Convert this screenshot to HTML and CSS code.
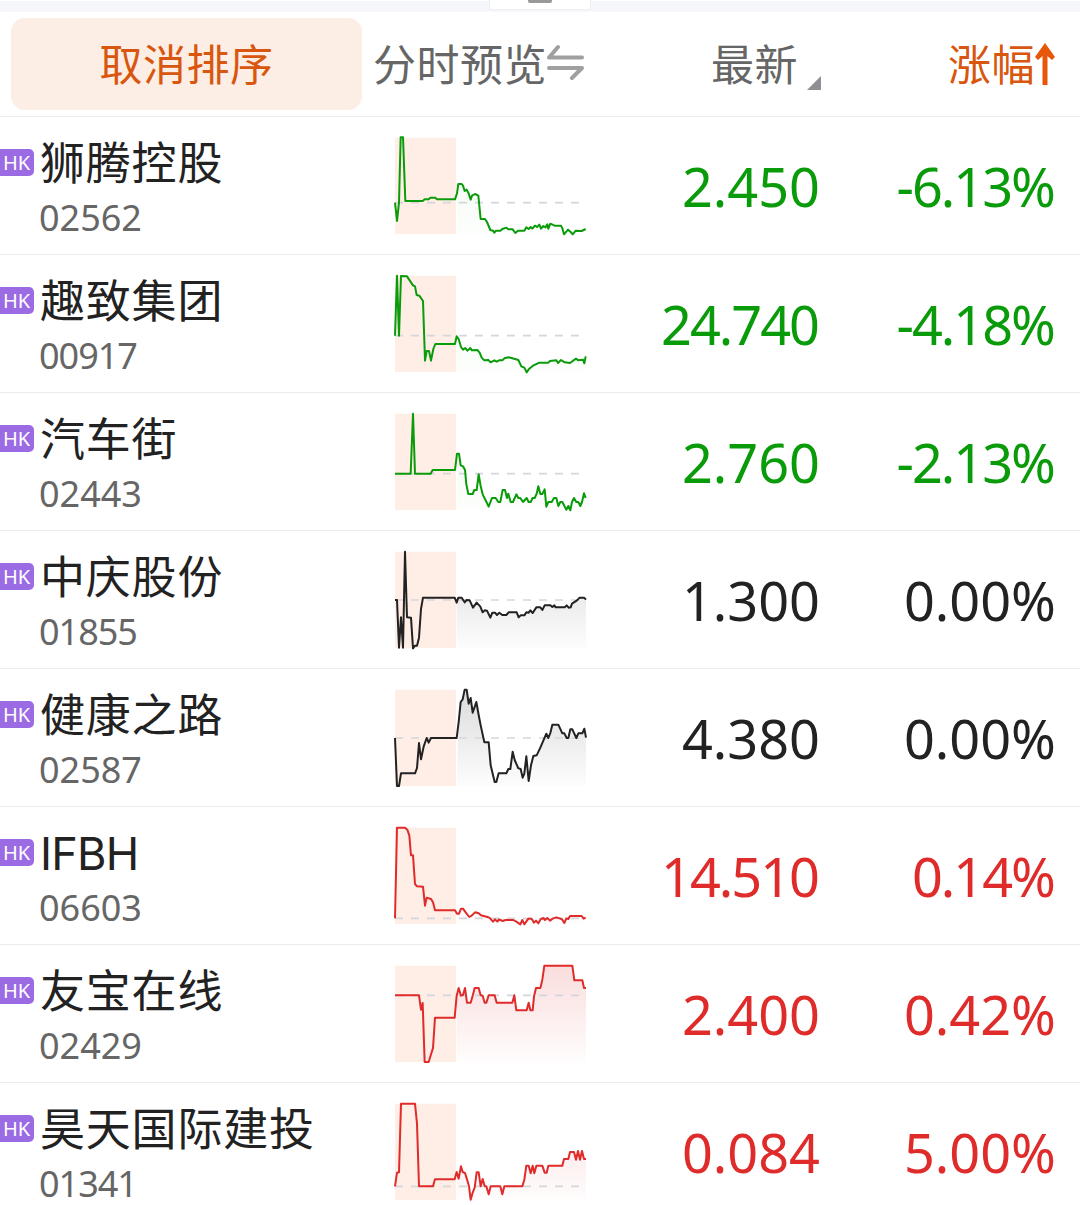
FILE: index.html
```html
<!DOCTYPE html>
<html lang="zh-CN">
  <head>
    <meta charset="UTF-8" />
    <meta name="viewport" content="width=device-width, initial-scale=1.0" />
    <title>自选股</title>
    <link rel="stylesheet" href="styles.css">
  </head>

  <body>
    <div class="strip">
      <div class="handle"><span class="bar"></span></div>
    </div>
    <div class="head">
      <button class="cancel">取消排序</button>
      <div class="preview">
        <span>分时预览</span>
        <svg class="swap" width="38" height="38" viewBox="0 0 38 38">
          <path d="M11 4L2 14.500H35M2 25H35L25 35" />
        </svg>
      </div>
      <div class="latest">
        <span>最新</span>
        <svg class="corner" width="14" height="14" viewBox="0 0 14 14"><path d="M14 0V14H0Z" /></svg>
      </div>
      <div class="change">
        <span>涨幅</span>
        <svg class="arrow" width="20" height="42" viewBox="0 0 20 42">
          <path class="stem" d="M10 42V6" />
          <path class="tip" d="M10 0L20 14L17 17L10 11L3 17L0 14Z" />
        </svg>
      </div>
    </div>
    <div class="list"></div>

    <script>
      // base: y of the dashed line, pre: line before the open, day: line after it
      const stocks = [
        {
          name: "狮腾控股", code: "02562", price: "2.450", rate: "-6.13%", type: "down", base: 233,
          pre: "30,233 36,288 42,233 47,37 54,37 61,228 113,228 119,223 131,223 136,218 151,218 156,223 210,223",
          day: "210,223 216,205 220,177 230,177 234,182 239,198 245,194 250,203 257,224 261,212 270,207 280,212 287,282 300,282 306,291 316,315 324,317 328,323 333,317 346,317 352,312 364,308 370,313 383,313 391,324 399,317 418,317 424,307 431,312 437,306 442,311 450,302 456,306 463,299 468,311 475,303 482,307 487,298 490,311 496,296 509,302 528,302 532,310 537,328 549,314 557,321 563,328 572,317 590,318 602,312",
        },
        {
          name: "趣致集团", code: "00917", price: "24.740", rate: "-4.18%", type: "down", base: 218,
          pre: "30,218 36,38 42,218 48,39 66,40 84,67 90,70 95,96 103,98 114,114 120,293 125,264 132,264 138,293 145,258 151,243 210,243",
          day: "210,243 215,220 221,228 228,252 234,260 241,255 247,263 256,255 260,262 277,261 284,269 290,284 298,292 310,291 317,298 328,292 335,296 342,292 352,292 358,286 371,283 390,288 400,291 409,310 418,314 425,328 432,318 444,308 463,299 490,299 495,294 514,292 519,300 528,291 539,298 555,300 573,287 580,292 594,290 598,301 602,280",
        },
        {
          name: "汽车街", code: "02443", price: "2.760", rate: "-2.13%", type: "down", base: 218,
          pre: "30,218 77,218 84,38 90,218 137,218 143,207 210,207",
          day: "210,207 216,158 222,158 227,193 234,196 240,207 244,250 250,279 263,279 268,267 275,267 281,220 287,255 293,280 303,300 311,317 321,291 332,291 340,303 346,303 353,267 360,267 366,291 370,278 377,303 384,303 394,280 400,291 406,291 414,303 425,291 431,303 437,303 443,291 449,291 455,278 460,256 466,279 472,279 479,265 484,317 490,303 500,303 507,291 514,291 520,315 526,303 532,303 544,326 550,315 556,328 561,303 567,291 574,303 580,303 586,315 591,303 597,277 602,291",
        },
        {
          name: "中庆股份", code: "01855", price: "1.300", rate: "0.00%", type: "flat", base: 183,
          pre: "30,183 36,183 42,326 48,235 54,326 60,38 66,235 78,236 84,328 90,320 96,320 102,296 108,210 114,176 209,176",
          day: "209,176 215,191 220,176 230,176 239,190 245,183 254,184 264,206 275,191 286,203 293,220 299,214 306,215 316,236 322,221 330,221 336,228 343,221 352,228 364,228 371,220 395,220 401,235 407,229 418,229 424,220 431,221 436,214 443,222 454,205 466,205 472,213 479,199 496,199 502,204 508,199 512,205 539,205 545,199 551,206 557,205 561,194 576,184 584,176 597,176 603,182",
        },
        {
          name: "健康之路", code: "02587", price: "4.380", rate: "0.00%", type: "flat", base: 183,
          pre: "30,183 36,327 42,327 48,289 90,289 96,273 102,198 108,247 116,209 125,183 131,197 138,183 215,183",
          day: "215,183 221,135 227,75 233,67 239,38 245,38 251,80 257,63 263,107 274,75 281,114 287,145 298,196 311,196 317,265 323,290 329,315 334,315 341,289 364,289 370,276 376,276 383,224 389,249 400,274 407,276 413,302 418,290 424,238 431,312 438,265 445,237 455,235 466,212 484,170 490,183 496,168 502,143 520,143 532,169 538,169 545,183 550,183 556,157 562,157 574,183 580,169 592,169 598,155 603,182",
        },
        {
          name: "IFBH", code: "06603", price: "14.510", rate: "0.14%", type: "up", base: 310,
          pre: "30,310 36,38 60,38 67,44 73,62 78,121 84,121 90,207 96,214 114,215 120,272 125,248 138,252 144,262 150,286 210,286",
          day: "210,286 216,296 222,296 228,281 234,281 242,292 253,306 260,302 270,292 281,295 288,301 307,306 313,308 324,320 330,313 337,320 342,313 353,318 362,315 385,315 394,320 406,328 412,315 418,328 430,311 440,311 447,323 453,317 460,325 467,313 475,309 480,315 487,309 495,317 503,311 514,307 526,311 532,314 538,324 544,310 550,312 555,303 590,303 596,311 602,308",
        },
        {
          name: "友宝在线", code: "02429", price: "2.400", rate: "0.42%", type: "up", base: 127,
          pre: "30,127 102,127 108,170 113,150 119,327 131,327 144,285 150,194 209,194",
          day: "209,194 215,128 221,105 228,128 234,126 240,105 246,149 257,149 263,128 269,105 281,105 287,127 293,128 299,149 304,149 311,127 329,127 335,149 382,149 388,127 394,172 425,172 431,149 436,172 443,172 447,130 453,105 466,105 472,80 478,38 562,38 568,82 592,82 597,105 603,105",
        },
        {
          name: "昊天国际建投", code: "01341", price: "0.084", rate: "5.00%", type: "up", base: 286,
          pre: "30,286 36,245 42,244 48,38 90,38 96,98 102,286 144,286 150,265 209,265",
          day: "209,265 215,243 221,263 228,226 233,243 240,246 246,265 252,286 257,326 263,305 269,290 275,244 281,244 287,286 293,264 299,286 304,286 311,310 317,286 346,286 352,310 358,286 412,286 418,266 424,224 431,224 437,247 443,224 448,247 454,224 472,224 479,245 485,245 490,224 532,224 537,204 550,204 555,183 567,183 573,206 579,180 585,206 591,180 597,204 603,204",
        },
      ]

      const list = document.querySelector(".list")
      render()

      // long numbers and numbers with a narrow 1 inside are set tighter
      function tight(text) {
        return text.slice(1).includes("1") || text.length > 5 ? " tight" : ""
      }

      function render() {
        for (let i = 0; i < stocks.length; i++) {
          const s = stocks[i]
          const latin = /^[A-Z]+$/.test(s.name) ? " latin" : ""
          const row = document.createElement("div")
          row.className = "row " + s.type
          row.innerHTML = `<div class="stock">
                <div class="title"><span class="tag">HK</span><span class="name${latin}">${s.name}</span></div>
                <div class="code${tight(s.code)}">${s.code}</div>
              </div>
              <svg class="chart" width="210" height="120" viewBox="0 0 630 360">
                <defs>
                  <linearGradient id="fill${i}" x1="0" y1="38" x2="0" y2="327" gradientUnits="userSpaceOnUse">
                    <stop class="from" offset="0" />
                    <stop class="to" offset="1" />
                  </linearGradient>
                </defs>
                <rect class="pre" x="30" y="38" width="183" height="289" />
                <polygon points="215,327 ${s.day.split(" ").slice(1).join(" ")} 603,327" fill="url(#fill${i})" />
                <path class="base" d="M30 ${s.base}H583" />
                <polyline class="line" points="${s.pre} ${s.day}" />
              </svg>
              <div class="price${tight(s.price)}">${s.price}</div>
              <div class="rate${tight(s.rate)}">${s.rate}</div>`
          list.appendChild(row)
        }
      }
    </script>
  </body>
</html>
```
FILE: styles.css
```css
* {
  box-sizing: border-box;
}

body {
  margin: 0;
  height: 1205px;
  overflow: hidden;
  background-color: #fff;
  color: #222;
  font-family: "Noto Sans", "Noto Sans CJK SC", sans-serif;
}

.strip {
  height: 12px;
  border-top: 1px solid #fff;
  background-color: #f6f7fa;
}

.handle {
  width: 102px;
  height: 10px;
  margin: -1px auto 0;
  background-color: #fff;
  border: 1px solid #eeeff1;
  border-top: 0;
}

.handle .bar {
  display: block;
  width: 24px;
  height: 3px;
  margin: 0 auto;
  border-radius: 0 0 2px 2px;
  background-color: #999;
}

.head {
  display: grid;
  grid-template-columns: 362px 224px 235px 1fr;
  height: 105px;
  border-bottom: 1px solid #ebebeb;
  color: #666;
  font-family: "Noto Sans CJK SC", sans-serif;
  font-size: 43px;
  line-height: 88px;
  letter-spacing: 0.5px;
  padding: 6px 0;
}

.cancel {
  width: 351px;
  height: 92px;
  margin-left: 11px;
  padding: 0 0 4px;
  border: 0;
  border-radius: 14px;
  background-color: #fdeee5;
  color: #d9560f;
  font: inherit;
  letter-spacing: inherit;
}

.preview {
  display: flex;
  padding-left: 11px;
}

.swap {
  flex: none;
  margin-top: 25px;
  fill: none;
  stroke: #a0a0a0;
  stroke-width: 4;
  stroke-linecap: round;
  stroke-linejoin: round;
}

.latest {
  display: flex;
  justify-content: flex-end;
}

.corner {
  margin: 58px 0 0 9px;
  fill: #8e8e93;
}

.change {
  display: flex;
  justify-content: flex-end;
  padding-right: 25px;
  color: #d9560f;
}

.arrow {
  margin-top: 25px;
}

.stem {
  stroke: #e8560a;
  stroke-width: 5;
}

.tip {
  fill: #e8560a;
}

.row {
  display: grid;
  grid-template-columns: 385px 210px 225px 236px;
  height: 138px;
  border-bottom: 1px solid #ebebeb;
}

.title {
  display: flex;
  align-items: center;
  height: 60px;
  margin-top: 15px;
}

.tag {
  width: 34px;
  height: 27px;
  border-radius: 0 5px 5px 0;
  background-color: #9b6be3;
  color: #fff;
  font-size: 20px;
  line-height: 27px;
  padding-left: 3px;
}

.name {
  padding: 4px 0 0 6px;
  font-family: Inter, "Noto Sans CJK SC", sans-serif;
  font-size: 45px;
  line-height: 56px;
  letter-spacing: 0.8px;
  white-space: nowrap;
}

.name.latin {
  letter-spacing: -0.8px;
}

.code {
  padding-left: 39px;
  color: #666;
  font-size: 36px;
  line-height: 52px;
}

.code.tight {
  letter-spacing: -1px;
}

.chart {
  margin-top: 8px;
}

.pre {
  fill: #ffeee6;
}

.base {
  stroke: #d5d6da;
  stroke-width: 5;
  stroke-dasharray: 24 24;
}

.line {
  fill: none;
  stroke: currentColor;
  stroke-width: 6;
  stroke-linejoin: round;
}

.from {
  stop-color: currentColor;
  stop-opacity: 0.16;
}

.to {
  stop-color: currentColor;
  stop-opacity: 0.01;
}

.down .from {
  stop-opacity: 0.06;
}

.price,
.rate {
  font-size: 54px;
  line-height: 139px;
  text-align: right;
  white-space: nowrap;
}

.price.tight,
.rate.tight {
  letter-spacing: -2px;
  padding-right: 2px;
}

.down .chart,
.down .price,
.down .rate {
  color: #0a9b0a;
}

.up .chart,
.up .price,
.up .rate {
  color: #e02b2b;
}
```
